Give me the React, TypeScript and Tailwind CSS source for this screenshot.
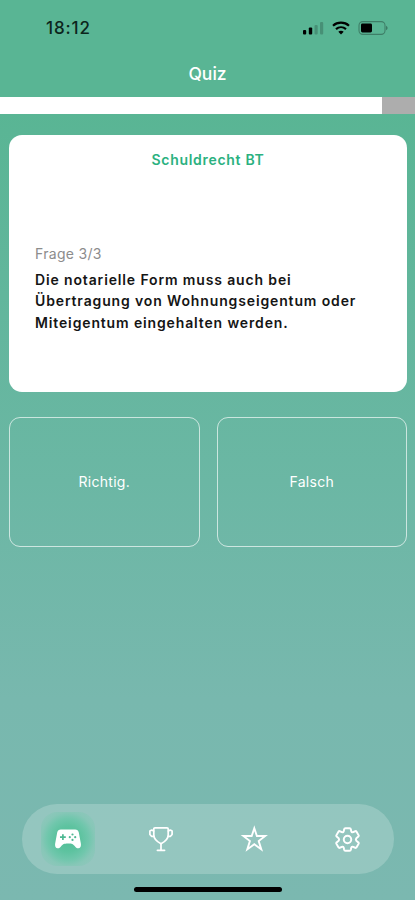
const answers = ["Richtig.", "Falsch"];

export default function App() {
  return (
    <div className="flex h-[900px] w-[415px] flex-col overflow-hidden bg-[linear-gradient(180deg,#59b594_0px,#59b594_110px,#6bb7a4_480px,#78b8ae_700px,#7bb8b0_900px)] font-['Inter',sans-serif]">
      <StatusBar />

      <header className="flex h-[41px] items-start justify-center pt-[6px]">
        <h1 className="text-[17.5px] font-medium leading-6 text-white">Quiz</h1>
      </header>

      {/* Progress */}
      <div className="h-[17px] bg-[#adadad]">
        <div className="h-full w-[382px] bg-white" />
      </div>

      <main className="flex flex-col gap-[25px] pl-[9px] pr-2 pt-[21px]">
        <section className="flex h-[257px] flex-col rounded-[13px] bg-white px-[26px] pt-[15px]">
          <h2 className="text-center text-[14px] font-semibold leading-5 tracking-[0.7px] text-[#2bb180]">
            Schuldrecht BT
          </h2>
          <p className="mt-[74px] text-[14px] leading-5 tracking-[0.3px] text-[#8c8c8c]">Frage 3/3</p>
          <p className="mt-[5px] whitespace-nowrap text-[14px] font-semibold leading-[21.3px] tracking-[0.86px] text-[#151515]">
            Die notarielle Form muss auch bei
            <br />
            Übertragung von Wohnungseigentum oder
            <br />
            Miteigentum eingehalten werden.
          </p>
        </section>

        <div className="grid grid-cols-2 gap-[17px]">
          {answers.map((answer) => (
            <button
              key={answer}
              className="h-[130px] rounded-[11px] border border-white/65 pb-px text-[14px] tracking-[0.3px] text-white"
            >
              {answer}
            </button>
          ))}
        </div>
      </main>

      <TabBar />

      {/* Home indicator */}
      <div className="mb-2 mt-[13px] h-[5px] w-[148px] self-center rounded-full bg-black" />
    </div>
  );
}

function StatusBar() {
  return (
    <div className="flex h-14 items-center justify-between pl-[46px] pr-[27px]">
      <span className="text-[17px] font-medium leading-5 tracking-[0.9px] text-[#0c251c]">18:12</span>
      <div className="flex items-center gap-2">
        <svg width="21" height="14" viewBox="0 0 21 14">
          <rect x="0" y="9" width="3.2" height="4.5" rx="1" />
          <rect x="5.8" y="6.5" width="3.4" height="7" rx="1" />
          <rect x="11.5" y="4" width="3.2" height="9.5" rx="1" opacity="0.2" />
          <rect x="17" y="1" width="3.2" height="12.5" rx="1" opacity="0.2" />
        </svg>
        <svg width="18" height="14" viewBox="0 0 18 14" fill="none" stroke="#000" strokeWidth="2.2">
          <path d="M1 4.7C5.4 .7 12.6 .7 17 4.7" />
          <path d="M4 8.1c2.9-2.5 7.1-2.5 10 0" />
          <path d="M9 13.5 6.3 10.8c1.5-1.3 3.9-1.3 5.4 0z" fill="#000" stroke="none" />
        </svg>
        <svg width="30" height="14" viewBox="0 0 30 14">
          <rect x="1" y=".6" width="26" height="12.8" rx="3.8" fill="none" stroke="#000" strokeOpacity="0.3" strokeWidth="1.1" />
          <rect x="3" y="2.6" width="11" height="8.8" rx="1.4" />
          <path d="M28.2 4.8c1.8.7 1.8 3.7 0 4.4z" opacity="0.4" />
        </svg>
      </div>
    </div>
  );
}

function TabBar() {
  return (
    <nav className="mx-[21.5px] mt-auto grid h-[70px] grid-cols-4 items-center justify-items-center rounded-full bg-white/20 text-white">
      <span className="flex size-[54px] items-center justify-center rounded-2xl bg-[radial-gradient(circle,#50bf96_0%,#5ec3a0_34%,rgba(100,199,166,0.75)_54%,rgba(118,200,174,0.45)_70%,rgba(140,200,185,0.1)_95%)]">
        <GameControllerIcon />
      </span>
      <TrophyIcon />
      <StarIcon />
      <GearIcon />
    </nav>
  );
}

function GameControllerIcon() {
  return (
    <svg width="26" height="20" viewBox="0 0 26 20">
      <path
        fill="currentColor"
        d="M5.8.4h14.400c1.900 0 3.200 1.200 3.600 3.200l2 10.600c.5 3-.4 4.900-2.300 5.100-1.700.1-2.700-.9-3.800-2.300-1.400-1.700-2.700-2.500-6.700-2.500s-5.300.8-6.700 2.500c-1.100 1.400-2.100 2.400-3.800 2.300C.6 19.100-.3 17.200.2 14.200l2-10.600C2.600 1.600 3.900.4 5.800.4z"
      />
      <path d="M7.900 5.300v5.800M5 8.200h5.800" stroke="#4eb892" strokeWidth="1.7" />
      <g fill="#4eb892">
        <circle cx="17.500" cy="5.500" r="1.100" />
        <circle cx="17.500" cy="10.900" r="1.100" />
        <circle cx="14.800" cy="8.200" r="1.100" />
        <circle cx="20.200" cy="8.200" r="1.100" />
      </g>
    </svg>
  );
}

function TrophyIcon() {
  return (
    <svg width="26" height="26" viewBox="0 0 26 26" fill="none" stroke="currentColor" strokeWidth="1.7" strokeLinejoin="round" strokeLinecap="round">
      <path d="M7 1.800h12c.8 0 1.200.5 1.200 1.300v6c0 3.700-2.900 6.500-7.200 8.700-4.300-2.200-7.200-5-7.200-8.700v-6c0-.8.4-1.300 1.200-1.300z" />
      <path d="M5.600 5 3.800 4.100 1.900 5.100v3.400l1.600 1.800h2.500" />
      <path d="M20.400 5l1.800-.9 1.900 1v3.400l-1.600 1.800H20" />
      <path d="M13 18v5.800M9.400 24.300h7.200" />
    </svg>
  );
}

function StarIcon() {
  return (
    <svg width="30" height="28" viewBox="0 0 30 28" fill="none" stroke="currentColor" strokeWidth="1.9">
      <path d="M15.300 3.200l2.600 7.800h8.300l-6.500 5.100 2.600 8.300-7-5.100-7 5.100 2.600-8.300L4.400 11h8.300z" />
    </svg>
  );
}

function GearIcon() {
  return (
    <svg width="25" height="25" viewBox="0 0 24 24" fill="none" stroke="currentColor" strokeWidth="1.9" strokeLinejoin="round">
      <path d="M10 1.200h4q1.100 0 1.300 1.300.3 2.500 1.100 2.600.9.200 2.600-.9 1.100-.6 1.700.3l1.900 3.300q.5 1-.5 1.600Q20 11 20 12t2.100 2.600q1 .6.500 1.600l-1.900 3.300q-.6.9-1.700.3-1.700-1.100-2.600-.9-.8.100-1.100 2.600-.2 1.300-1.300 1.300h-4q-1.100 0-1.300-1.300-.3-2.500-1.100-2.600-.9-.2-2.600.9-1.100.6-1.700-.3l-1.900-3.300q-.5-1 .5-1.600Q4 13 4 12t-2.100-2.600q-1-.6-.5-1.600l1.900-3.300q.6-.9 1.700-.3 1.700 1.100 2.600.9.800-.1 1.100-2.600.2-1.300 1.300-1.300z" />
      <circle cx="12" cy="12" r="3.600" />
    </svg>
  );
}
